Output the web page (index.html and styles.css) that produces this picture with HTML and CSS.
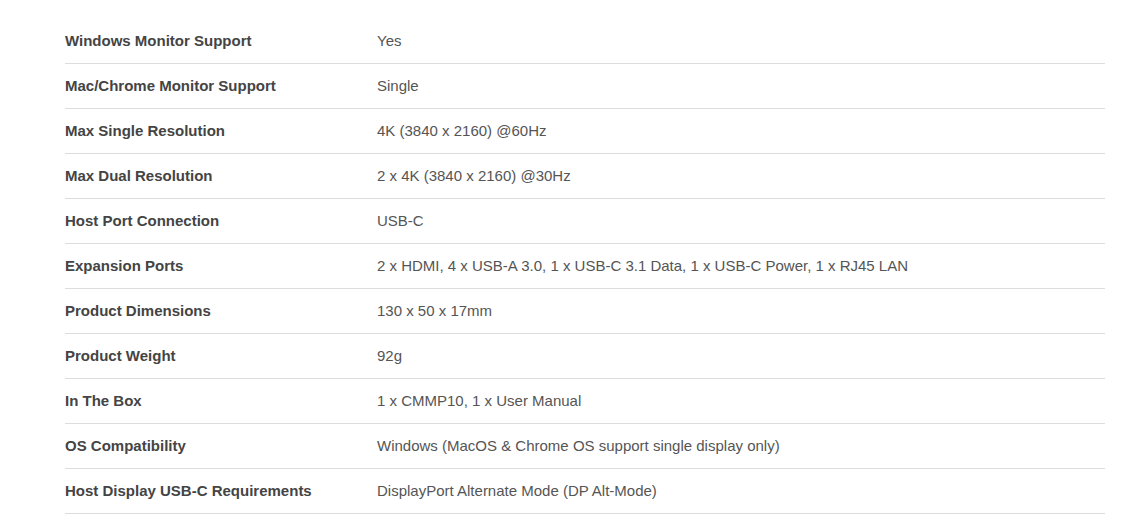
FILE: index.html
```html
<!DOCTYPE html>
<html>
<head>
  <title>Specifications</title>
  <meta name="viewport" content="width=device-width, initial-scale=1.0">
  <link rel="stylesheet" href="styles.css">
</head>
<body>

  <table class="specs">
    <tr><th>Windows Monitor Support</th><td>Yes</td></tr>
    <tr><th>Mac/Chrome Monitor Support</th><td>Single</td></tr>
    <tr><th>Max Single Resolution</th><td>4K (3840 x 2160) @60Hz</td></tr>
    <tr><th>Max Dual Resolution</th><td>2 x 4K (3840 x 2160) @30Hz</td></tr>
    <tr><th>Host Port Connection</th><td>USB-C</td></tr>
    <tr><th>Expansion Ports</th><td>2 x HDMI, 4 x USB-A 3.0, 1 x USB-C 3.1 Data, 1 x USB-C Power, 1 x RJ45 LAN</td></tr>
    <tr><th>Product Dimensions</th><td>130 x 50 x 17mm</td></tr>
    <tr><th>Product Weight</th><td>92g</td></tr>
    <tr><th>In The Box</th><td>1 x CMMP10, 1 x User Manual</td></tr>
    <tr><th>OS Compatibility</th><td>Windows (MacOS &amp; Chrome OS support single display only)</td></tr>
    <tr><th>Host Display USB-C Requirements</th><td>DisplayPort Alternate Mode (DP Alt-Mode)</td></tr>
  </table>

</body>
</html>
```

FILE: styles.css
```css
html, body {
  margin: 0;
  padding: 0;
  background: #fff;
  font-family: "Liberation Sans", Arial, sans-serif;
}

body {
  padding: 19px 30px 0 65px;
}

.specs {
  width: 1040px;
  border-collapse: collapse;
  font-size: 15px;
  color: #555;
}

.specs tr {
  border-bottom: 1px solid #ddd;
}

.specs th,
.specs td {
  height: 42px;
  padding: 0 0 2px 0;
  text-align: left;
  vertical-align: middle;
}

.specs th {
  width: 312px;
  font-weight: bold;
  color: #444;
}
```
